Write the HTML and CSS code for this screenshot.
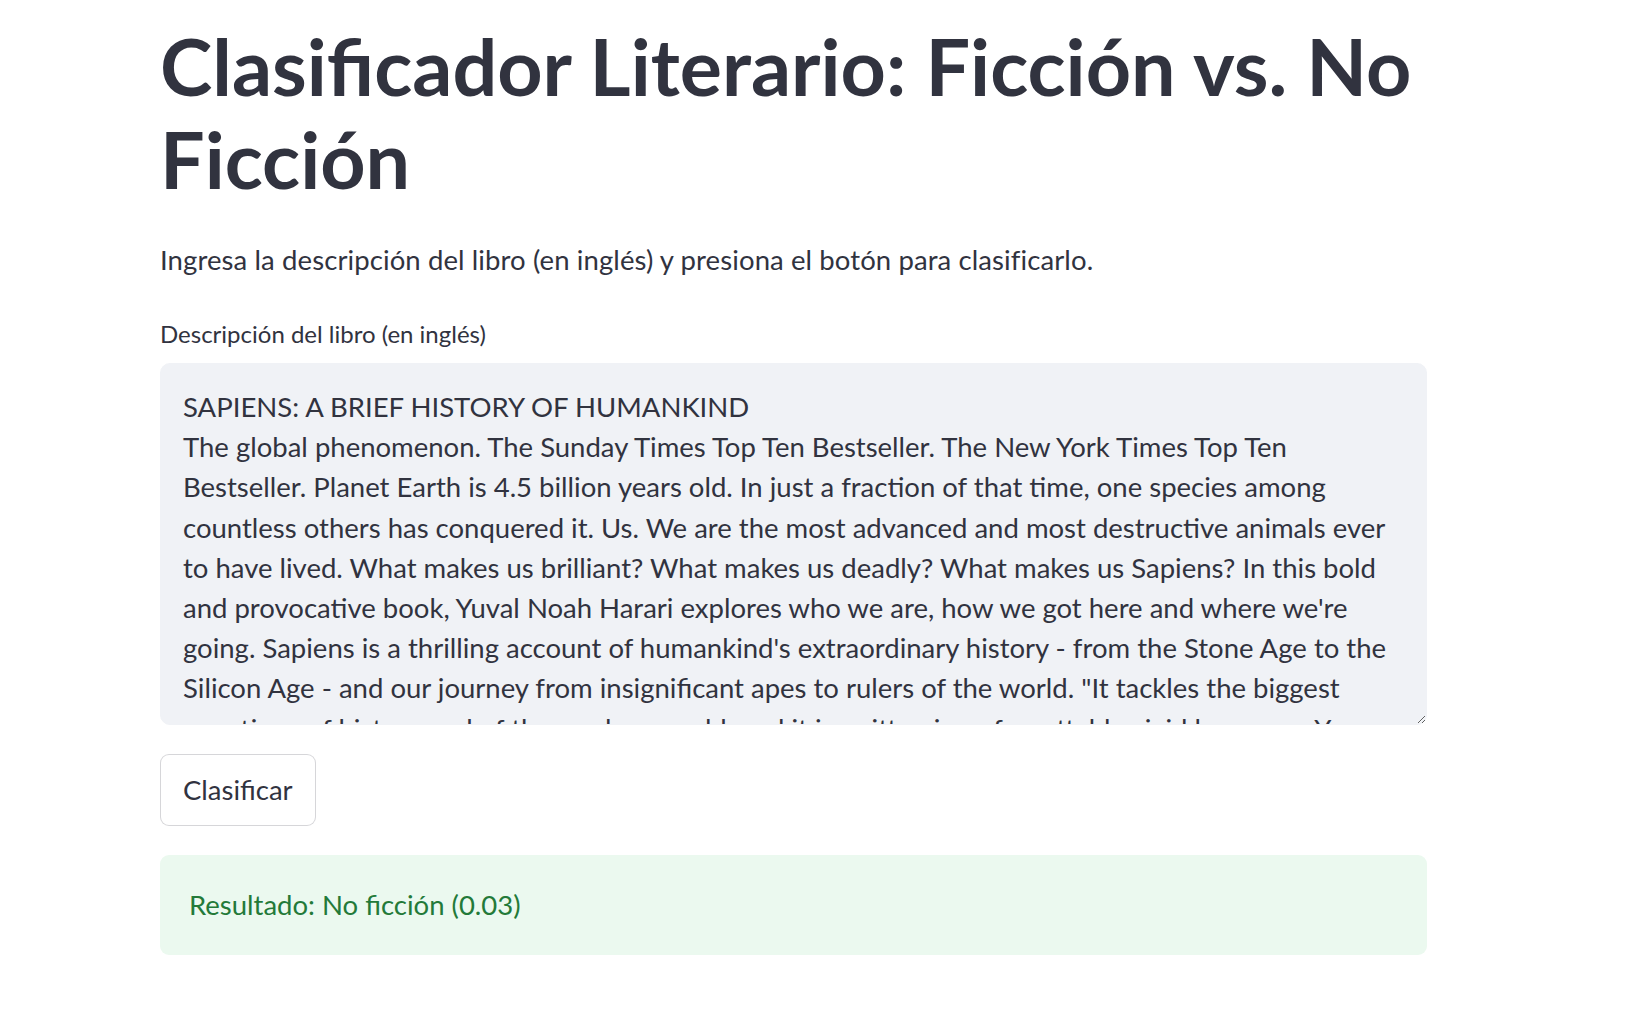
FILE: index.html
```html
<!DOCTYPE html>
<html lang="es">
<head>
<meta charset="utf-8">
<title>Clasificador Literario</title>
<link rel="stylesheet" href="styles.css">
</head>
<body>
<main class="main">
  <h1 class="title">Clasificador Literario: Ficción vs. No Ficción</h1>
  <p class="intro">Ingresa la descripción del libro (en inglés) y presiona el botón para clasificarlo.</p>
  <label class="field-label" for="desc">Descripción del libro (en inglés)</label>
  <textarea id="desc" class="desc" wrap="off">SAPIENS: A BRIEF HISTORY OF HUMANKIND
The global phenomenon. The Sunday Times Top Ten Bestseller. The New York Times Top Ten
Bestseller. Planet Earth is 4.5 billion years old. In just a fraction of that time, one species among
countless others has conquered it. Us. We are the most advanced and most destructive animals ever
to have lived. What makes us brilliant? What makes us deadly? What makes us Sapiens? In this bold
and provocative book, Yuval Noah Harari explores who we are, how we got here and where we're
going. Sapiens is a thrilling account of humankind's extraordinary history - from the Stone Age to the
Silicon Age - and our journey from insignificant apes to rulers of the world. "It tackles the biggest
questions of history and of the modern world, and it is written in unforgettably vivid language. You
will love it!"</textarea>
  <button class="btn" type="button">Clasificar</button>
  <div class="alert">Resultado: No ficción (0.03)</div>
</main>
</body>
</html>
```

FILE: styles.css
```css
html, body {
  margin: 0;
  padding: 0;
  background: #ffffff;
}

body {
  font-family: Lato, "Source Sans Pro", "Noto Sans", sans-serif;
  color: #31333f;
}

.main {
  width: 1267px;
  margin-left: 160px;
  display: flex;
  flex-direction: column;
  align-items: flex-start;
}

.title {
  margin: 19px 0 0 0;
  font-size: 79px;
  line-height: 93px;
  font-weight: 700;
  letter-spacing: 0;
  color: #31333f;
}

.intro {
  margin: 33px 0 0 0;
  font-size: 27.5px;
  line-height: 44px;
  letter-spacing: 0.1px;
}

.field-label {
  margin-top: 33px;
  font-size: 24px;
  line-height: 38px;
}

.desc {
  box-sizing: border-box;
  margin-top: 10px;
  width: 1267px;
  height: 362px;
  padding: 23px 22px 10px 22px;
  border: 1px solid #f0f2f6;
  border-radius: 10px;
  background: #f0f2f6;
  color: #31333f;
  font-family: inherit;
  font-size: 27.5px;
  line-height: 40.2px;
  white-space: pre;
  overflow: hidden;
  resize: vertical;
  outline: none;
}

.btn {
  box-sizing: border-box;
  margin-top: 29px;
  height: 72px;
  padding: 0 22px;
  border: 1px solid rgba(49, 51, 63, 0.2);
  border-radius: 9px;
  background: #ffffff;
  color: #31333f;
  font-family: inherit;
  font-size: 27.5px;
  line-height: 44px;
}

.alert {
  box-sizing: border-box;
  margin-top: 29px;
  width: 1267px;
  height: 100px;
  padding: 28px 29px;
  border-radius: 9px;
  background: #ebf9ef;
  color: #237a39;
  font-size: 27.5px;
  line-height: 44px;
}
```
